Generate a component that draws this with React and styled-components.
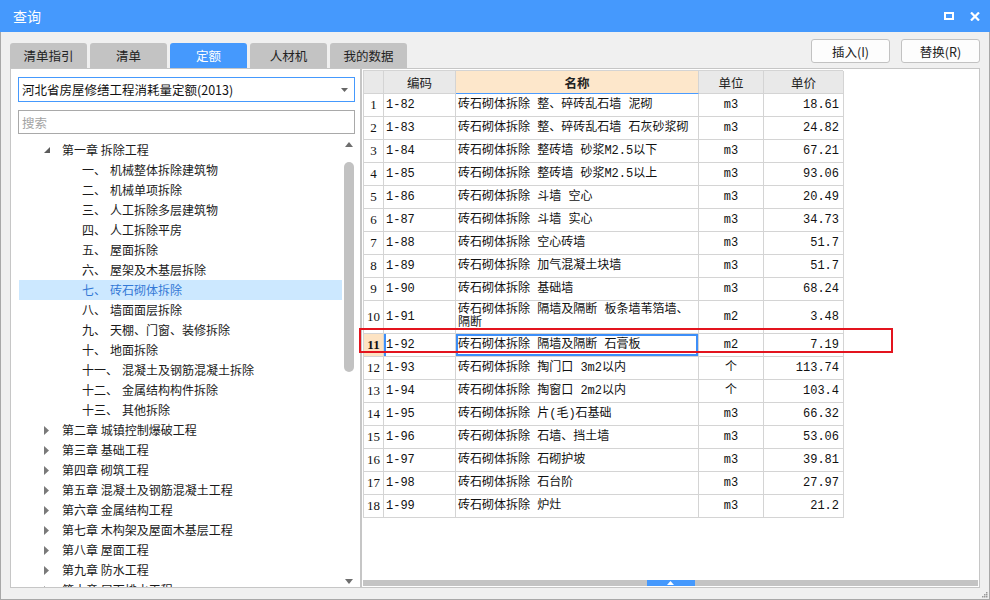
import React from "react";
import styled, { createGlobalStyle } from "styled-components";

const GlobalStyle = createGlobalStyle`
  html, body { margin: 0; padding: 0; }
  body {
    font-family: "Noto Sans CJK SC", "Noto Sans", sans-serif;
    font-size: 12px;
    color: #1e1e1e;
    background: #ffffff;
  }
  * { box-sizing: border-box; }
`;

const Window = styled.div`
  width: 990px;
  height: 600px;
  display: flex;
  flex-direction: column;
  position: relative;
  overflow: hidden;
`;

const TitleBar = styled.div`
  height: 32px;
  background: #4599fd;
  color: #fff;
  display: flex;
  align-items: center;
  justify-content: space-between;
  padding: 0 10px 0 13px;
`;

const Title = styled.span`
  font-size: 14px;
  line-height: 32px;
`;

const TitleButtons = styled.div`
  display: flex;
  align-items: center;
  gap: 16px;
`;

const Body = styled.div`
  flex: 1;
  background: #f0f0f0;
  border: 1px solid #a8a8a8;
  border-top: none;
  padding: 7px 9px 11px 9px;
  display: flex;
  flex-direction: column;
`;

const TopRow = styled.div`
  height: 29px;
  display: flex;
  justify-content: space-between;
`;

const Tabs = styled.div`
  align-self: flex-end;
  display: flex;
  gap: 3px;
`;

const Tab = styled.div`
  width: 77px;
  height: 25px;
  line-height: 25px;
  text-align: center;
  border-radius: 3px 3px 0 0;
  font-size: 12.5px;
  background: ${(p) => (p.$active ? "#4599fd" : "#c3c3c3")};
  color: ${(p) => (p.$active ? "#ffffff" : "#222222")};
`;

const Buttons = styled.div`
  display: flex;
  gap: 11px;
  align-self: flex-start;
`;

const Button = styled.button`
  width: 79px;
  height: 24px;
  border: 1px solid #c2c2c2;
  border-radius: 3px;
  background: #fdfdfd;
  font-family: inherit;
  font-size: 12.5px;
  color: #222;
  padding: 0;
`;

const Main = styled.div`
  height: 520px;
  display: flex;
  position: relative;
`;

const LeftPanel = styled.div`
  width: 351px;
  background: #fff;
  border: 1px solid #c6c6c6;
  padding: 8px 5px 0 7px;
  display: flex;
  flex-direction: column;
`;

const Select = styled.div`
  height: 25px;
  border: 1px solid #4599fd;
  display: flex;
  align-items: center;
  justify-content: space-between;
  padding: 0 6px 0 3px;
  font-size: 12.5px;
  color: #111;
`;

const Search = styled.div`
  margin-top: 8px;
  height: 24px;
  border: 1px solid #a9a9a9;
  padding-left: 3px;
  display: flex;
  align-items: center;
  color: #a3a3a3;
  font-size: 12.5px;
`;

const TreeBox = styled.div`
  margin-top: 4px;
  margin-left: 1px;
  flex: 1;
  display: flex;
  overflow: hidden;
`;

const TreeList = styled.div`
  flex: 1;
  padding-top: 2px;
  overflow: hidden;
`;

const TreeRow = styled.div`
  height: 20px;
  line-height: 20px;
  display: flex;
  align-items: center;
  white-space: nowrap;
  padding-left: ${(p) => (p.$level === 0 ? 25 : 63)}px;
  background: ${(p) => (p.$selected ? "#cce8ff" : "transparent")};
  color: ${(p) => (p.$selected ? "#3479d6" : "#1a1a1a")};
`;

const Toggle = styled.span`
  width: 18px;
  display: inline-flex;
  align-items: center;
`;

const Num = styled.span`
  margin-right: 4px;
`;

const VScroll = styled.div`
  width: 13px;
  display: flex;
  flex-direction: column;
  align-items: center;
`;

const ScrollArrow = styled.div`
  height: 12px;
  display: flex;
  align-items: center;
  justify-content: center;
`;

const ScrollTrack = styled.div`
  flex: 1;
  padding-top: 12px;
`;

const Thumb = styled.div`
  width: 10px;
  height: 210px;
  border-radius: 5px;
  background: #c2c2c2;
`;

const TablePanel = styled.div`
  flex: 1;
  background: #fff;
  border: 1px solid #c6c6c6;
  padding: 1px 0 0 1px;
  display: flex;
  flex-direction: column;
`;

const TableArea = styled.div`
  flex: 1;
  overflow: hidden;
`;

const Grid = styled.div`
  width: 480px;
  border-left: 1px solid #d4d4d4;
  border-top: 1px solid #d4d4d4;
`;

const Row = styled.div`
  display: grid;
  grid-template-columns: 20px 72px 243px 65px 80px;
  height: ${(p) => p.$h || 23}px;
`;

const HeadCell = styled.div`
  border-right: 1px solid #d4d4d4;
  border-bottom: 1px solid ${(p) => (p.$accent ? "#4a9bff" : "#d4d4d4")};
  background: ${(p) => (p.$accent ? "#fde7cb" : "#e9e9e9")};
  font-weight: ${(p) => (p.$accent ? 700 : 400)};
  font-size: 12.5px;
  display: flex;
  align-items: center;
  justify-content: center;
  color: #222;
`;

const Cell = styled.div`
  border-right: 1px solid #d4d4d4;
  border-bottom: 1px solid #d4d4d4;
  font-family: "Liberation Mono", "Noto Sans CJK SC", monospace;
  font-size: 12px;
  line-height: 14px;
  display: flex;
  align-items: center;
  overflow: hidden;
  white-space: nowrap;
  padding: 0 ${(p) => (p.$align === "right" ? 4 : 2)}px 0 2px;
  justify-content: ${(p) =>
    p.$align === "center" ? "center" : p.$align === "right" ? "flex-end" : "flex-start"};
  color: #111;
`;

const NumCell = styled(Cell)`
  background: ${(p) => (p.$active ? "#fde3c3" : "#fff")};
  font-weight: ${(p) => (p.$active ? 700 : 400)};
  font-family: "Liberation Serif", "Liberation Mono", serif;
  font-size: 13px;
  padding: 0;
`;

const CodeCell = styled(Cell)`
  box-shadow: ${(p) => (p.$active ? "inset 2px 0 0 #3d8ef8" : "none")};
`;

const NameCell = styled(Cell)`
  box-shadow: ${(p) => (p.$active ? "inset 0 0 0 2px #3d8ef8" : "none")};
  line-height: 13px;
`;

const HScroll = styled.div`
  height: 6px;
  margin-bottom: 1px;
  margin-right: 1px;
  background: #c4c4c4;
  display: flex;
  justify-content: center;
`;

const HThumb = styled.div`
  width: 48px;
  background: #4599fd;
  display: flex;
  align-items: center;
  justify-content: center;
`;

const Highlight = styled.div`
  position: absolute;
  left: 349px;
  top: 260px;
  width: 534px;
  height: 25px;
  border: 2px solid #e3141e;
  pointer-events: none;
`;

const Grip = styled.svg`
  position: absolute;
  right: 2px;
  bottom: 2px;
`;

const chapters = [
  "第二章 城镇控制爆破工程",
  "第三章 基础工程",
  "第四章 砌筑工程",
  "第五章 混凝土及钢筋混凝土工程",
  "第六章 金属结构工程",
  "第七章 木构架及屋面木基层工程",
  "第八章 屋面工程",
  "第九章 防水工程",
  "第十章 屋面排水工程",
];

const sections = [
  ["一、", "机械整体拆除建筑物"],
  ["二、", "机械单项拆除"],
  ["三、", "人工拆除多层建筑物"],
  ["四、", "人工拆除平房"],
  ["五、", "屋面拆除"],
  ["六、", "屋架及木基层拆除"],
  ["七、", "砖石砌体拆除"],
  ["八、", "墙面面层拆除"],
  ["九、", "天棚、门窗、装修拆除"],
  ["十、", "地面拆除"],
  ["十一、", "混凝土及钢筋混凝土拆除"],
  ["十二、", "金属结构构件拆除"],
  ["十三、", "其他拆除"],
];

const rows = [
  ["1-82", "砖石砌体拆除 整、碎砖乱石墙 泥砌", "m3", "18.61"],
  ["1-83", "砖石砌体拆除 整、碎砖乱石墙 石灰砂浆砌", "m3", "24.82"],
  ["1-84", "砖石砌体拆除 整砖墙 砂浆M2.5以下", "m3", "67.21"],
  ["1-85", "砖石砌体拆除 整砖墙 砂浆M2.5以上", "m3", "93.06"],
  ["1-86", "砖石砌体拆除 斗墙 空心", "m3", "20.49"],
  ["1-87", "砖石砌体拆除 斗墙 实心", "m3", "34.73"],
  ["1-88", "砖石砌体拆除 空心砖墙", "m3", "51.7"],
  ["1-89", "砖石砌体拆除 加气混凝土块墙", "m3", "51.7"],
  ["1-90", "砖石砌体拆除 基础墙", "m3", "68.24"],
  ["1-91", ["砖石砌体拆除 隔墙及隔断 板条墙苇箔墙、", "隔断"], "m2", "3.48"],
  ["1-92", "砖石砌体拆除 隔墙及隔断 石膏板", "m2", "7.19"],
  ["1-93", "砖石砌体拆除 掏门口 3m2以内", "个", "113.74"],
  ["1-94", "砖石砌体拆除 掏窗口 2m2以内", "个", "103.4"],
  ["1-95", "砖石砌体拆除 片(毛)石基础", "m3", "66.32"],
  ["1-96", "砖石砌体拆除 石墙、挡土墙", "m3", "53.06"],
  ["1-97", "砖石砌体拆除 石砌护坡", "m3", "39.81"],
  ["1-98", "砖石砌体拆除 石台阶", "m3", "27.97"],
  ["1-99", "砖石砌体拆除 炉灶", "m3", "21.2"],
];

const Expanded = () => (
  <svg width="7" height="7" viewBox="0 0 7 7">
    <polygon points="6,0 6,6 0,6" fill="#5c5c5c" />
  </svg>
);

const Collapsed = () => (
  <svg width="5" height="9" viewBox="0 0 5 9">
    <polygon points="0,0 5,4.5 0,9" fill="#7a7a7a" />
  </svg>
);

function Tree() {
  return (
    <TreeBox>
      <TreeList>
        <TreeRow $level={0}>
          <Toggle>
            <Expanded />
          </Toggle>
          第一章 拆除工程
        </TreeRow>
        {sections.map(([n, t]) => (
          <TreeRow key={n} $level={1} $selected={n === "七、"}>
            <Num>{n}</Num>
            {t}
          </TreeRow>
        ))}
        {chapters.map((c) => (
          <TreeRow key={c} $level={0}>
            <Toggle>
              <Collapsed />
            </Toggle>
            {c}
          </TreeRow>
        ))}
      </TreeList>
      <VScroll>
        <ScrollArrow>
          <svg width="8" height="5" viewBox="0 0 8 5">
            <polygon points="0,5 4,0 8,5" fill="#6e6e6e" />
          </svg>
        </ScrollArrow>
        <ScrollTrack>
          <Thumb />
        </ScrollTrack>
        <ScrollArrow>
          <svg width="8" height="5" viewBox="0 0 8 5">
            <polygon points="0,0 8,0 4,5" fill="#6e6e6e" />
          </svg>
        </ScrollArrow>
      </VScroll>
    </TreeBox>
  );
}

function QuotaTable() {
  return (
    <Grid>
      <Row>
        <HeadCell />
        <HeadCell>编码</HeadCell>
        <HeadCell $accent>名称</HeadCell>
        <HeadCell>单位</HeadCell>
        <HeadCell>单价</HeadCell>
      </Row>
      {rows.map(([code, name, unit, price], i) => {
        const active = i === 10;
        const multi = Array.isArray(name);
        return (
          <Row key={code} $h={multi ? 33 : 23}>
            <NumCell $align="center" $active={active}>
              {i + 1}
            </NumCell>
            <CodeCell $active={active}>{code}</CodeCell>
            <NameCell $active={active}>
              {multi ? (
                <span>
                  {name[0]}
                  <br />
                  {name[1]}
                </span>
              ) : (
                name
              )}
            </NameCell>
            <Cell $align="center">{unit}</Cell>
            <Cell $align="right">{price}</Cell>
          </Row>
        );
      })}
    </Grid>
  );
}

export default function App() {
  return (
    <>
      <GlobalStyle />
      <Window>
        <TitleBar>
          <Title>查询</Title>
          <TitleButtons>
            <svg width="10" height="8" viewBox="0 0 10 8">
              <rect x="1" y="1" width="8" height="6" fill="none" stroke="#fff" strokeWidth="2" />
            </svg>
            <svg width="10" height="9" viewBox="0 0 10 9">
              <path d="M1 0.5 L9 8.5 M9 0.5 L1 8.5" stroke="#fff" strokeWidth="2.2" />
            </svg>
          </TitleButtons>
        </TitleBar>
        <Body>
          <TopRow>
            <Tabs>
              <Tab>清单指引</Tab>
              <Tab>清单</Tab>
              <Tab $active>定额</Tab>
              <Tab>人材机</Tab>
              <Tab>我的数据</Tab>
            </Tabs>
            <Buttons>
              <Button>插入(I)</Button>
              <Button>替换(R)</Button>
            </Buttons>
          </TopRow>
          <Main>
            <LeftPanel>
              <Select>
                <span>河北省房屋修缮工程消耗量定额(2013)</span>
                <svg width="7" height="4" viewBox="0 0 7 4">
                  <polygon points="0,0 7,0 3.5,4" fill="#666" />
                </svg>
              </Select>
              <Search>搜索</Search>
              <Tree />
            </LeftPanel>
            <TablePanel>
              <TableArea>
                <QuotaTable />
              </TableArea>
              <HScroll>
                <HThumb>
                  <svg width="7" height="4" viewBox="0 0 7 4">
                    <polygon points="0,4 3.5,0 7,4" fill="#fff" />
                  </svg>
                </HThumb>
              </HScroll>
            </TablePanel>
            <Highlight />
          </Main>
        </Body>
        <Grip width="6" height="6" viewBox="0 0 6 6">
          <rect x="4" y="0" width="1.5" height="1.5" fill="#9a9a9a" />
          <rect x="2" y="2" width="1.5" height="1.5" fill="#9a9a9a" />
          <rect x="4" y="2" width="1.5" height="1.5" fill="#9a9a9a" />
          <rect x="0" y="4" width="1.5" height="1.5" fill="#9a9a9a" />
          <rect x="2" y="4" width="1.5" height="1.5" fill="#9a9a9a" />
          <rect x="4" y="4" width="1.5" height="1.5" fill="#9a9a9a" />
        </Grip>
      </Window>
    </>
  );
}
